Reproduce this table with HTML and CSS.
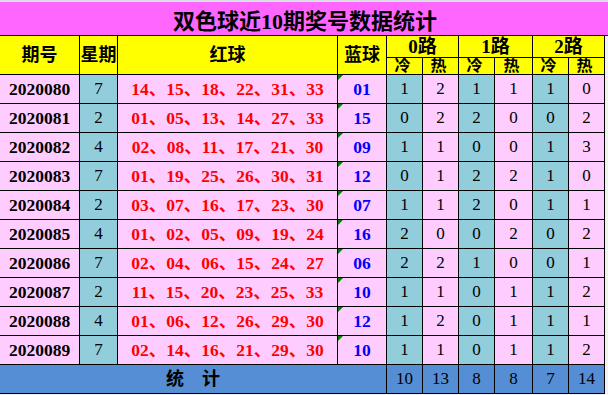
FILE: index.html
```html
<!DOCTYPE html>
<html lang="zh">
<head>
<meta charset="utf-8">
<title>双色球近10期奖号数据统计</title>
<link rel="stylesheet" href="styles.css">
</head>
<body>
<div class="sheet">
  <div class="title">双色球近10期奖号数据统计</div>
  <div class="grid">
    <div class="h span2r">期号</div>
    <div class="h span2r">星期</div>
    <div class="h span2r">红球</div>
    <div class="h span2r">蓝球</div>
    <div class="h span2c">0路</div>
    <div class="h span2c">1路</div>
    <div class="h span2c">2路</div>
    <div class="h sub">冷</div><div class="h sub">热</div>
    <div class="h sub">冷</div><div class="h sub">热</div>
    <div class="h sub">冷</div><div class="h sub">热</div>

    <div class="c id">2020080</div><div class="c wk">7</div><div class="c red">14、15、18、22、31、33</div><div class="c blue">01</div><div class="c n cold">1</div><div class="c n">2</div><div class="c n cold">1</div><div class="c n">1</div><div class="c n cold">1</div><div class="c n">0</div>
    <div class="c id">2020081</div><div class="c wk">2</div><div class="c red">01、05、13、14、27、33</div><div class="c blue">15</div><div class="c n cold">0</div><div class="c n">2</div><div class="c n cold">2</div><div class="c n">0</div><div class="c n cold">0</div><div class="c n">2</div>
    <div class="c id">2020082</div><div class="c wk">4</div><div class="c red">02、08、11、17、21、30</div><div class="c blue">09</div><div class="c n cold">1</div><div class="c n">1</div><div class="c n cold">0</div><div class="c n">0</div><div class="c n cold">1</div><div class="c n">3</div>
    <div class="c id">2020083</div><div class="c wk">7</div><div class="c red">01、19、25、26、30、31</div><div class="c blue">12</div><div class="c n cold">0</div><div class="c n">1</div><div class="c n cold">2</div><div class="c n">2</div><div class="c n cold">1</div><div class="c n">0</div>
    <div class="c id">2020084</div><div class="c wk">2</div><div class="c red">03、07、16、17、23、30</div><div class="c blue">07</div><div class="c n cold">1</div><div class="c n">1</div><div class="c n cold">2</div><div class="c n">0</div><div class="c n cold">1</div><div class="c n">1</div>
    <div class="c id">2020085</div><div class="c wk">4</div><div class="c red">01、02、05、09、19、24</div><div class="c blue">16</div><div class="c n cold">2</div><div class="c n">0</div><div class="c n cold">0</div><div class="c n">2</div><div class="c n cold">0</div><div class="c n">2</div>
    <div class="c id">2020086</div><div class="c wk">7</div><div class="c red">02、04、06、15、24、27</div><div class="c blue">06</div><div class="c n cold">2</div><div class="c n">2</div><div class="c n cold">1</div><div class="c n">0</div><div class="c n cold">0</div><div class="c n">1</div>
    <div class="c id">2020087</div><div class="c wk">2</div><div class="c red">11、15、20、23、25、33</div><div class="c blue">10</div><div class="c n cold">1</div><div class="c n">1</div><div class="c n cold">0</div><div class="c n">1</div><div class="c n cold">1</div><div class="c n">2</div>
    <div class="c id">2020088</div><div class="c wk">4</div><div class="c red">01、06、12、26、29、30</div><div class="c blue">12</div><div class="c n cold">1</div><div class="c n">2</div><div class="c n cold">0</div><div class="c n">1</div><div class="c n cold">1</div><div class="c n">1</div>
    <div class="c id">2020089</div><div class="c wk">7</div><div class="c red">02、14、16、21、29、30</div><div class="c blue">10</div><div class="c n cold">1</div><div class="c n">1</div><div class="c n cold">0</div><div class="c n">1</div><div class="c n cold">1</div><div class="c n">2</div>

    <div class="s label">统　计</div>
    <div class="s n">10</div><div class="s n">13</div><div class="s n">8</div><div class="s n">8</div><div class="s n">7</div><div class="s n">14</div>
  </div>
</div>
</body>
</html>
```

FILE: styles.css
```css
html, body {
  margin: 0;
  padding: 0;
  background: #ffffff;
}

.sheet {
  width: 608px;
  height: 395px;
  background: #f2f2f2;
  border-top: 2px solid #d9dde4;
  box-sizing: border-box;
}

.title {
  width: 606px;
  height: 33px;
  background: #ff66ff;
  border-bottom: 1px solid #000;
  display: flex;
  align-items: center;
  justify-content: center;
  font-family: "Liberation Serif", "Noto Sans CJK SC", serif;
  font-weight: 700;
  font-size: 22px;
  color: #000;
  padding-left: 2px;
  box-sizing: content-box;
}

.grid {
  display: grid;
  grid-template-columns: 79px 37px 219px 48px 35px 35px 35px 37px 35px 35px;
  grid-template-rows: 21px 16px repeat(10, 28px) 28px;
  gap: 1px;
  background: #000;
  width: 604px;
  border-right: 1px solid #000;
  border-bottom: 1px solid #000;
}

.grid > div {
  display: flex;
  align-items: center;
  justify-content: center;
  overflow: hidden;
  white-space: nowrap;
  position: relative;
}

.h {
  background: #ffff00;
  font-family: "Liberation Serif", "Noto Sans CJK SC", serif;
  font-weight: 700;
  font-size: 18px;
  line-height: 20px;
  color: #000;
}

.span2r { grid-row: span 2; }

.span2c {
  grid-column: span 2;
  font-size: 19px;
  line-height: 20px;
}

.grid > .sub {
  align-items: flex-start;
  font-size: 16px;
  line-height: 16px;
  padding-right: 4px;
}

.c {
  background: #ffccff;
  font-family: "Liberation Serif", "Noto Sans CJK SC", serif;
  font-size: 17px;
  line-height: 20px;
  color: #000;
}

.id {
  font-weight: 700;
  font-size: 17.5px;
}

.wk {
  background: #92cddc !important;
  font-size: 17px;
}

.red {
  color: #ff0000;
  font-weight: 700;
  font-size: 17.5px;
}

.blue {
  color: #0000ff;
  font-weight: 700;
  font-size: 17.5px;
}

.blue::before {
  content: "";
  position: absolute;
  left: 0;
  top: 0;
  border-top: 5px solid #008000;
  border-right: 5px solid transparent;
}

.n {
  font-size: 17px;
  font-weight: 400;
}

.cold {
  background: #92cddc;
}

.s {
  background: #558ed5;
  font-family: "Liberation Serif", "Noto Sans CJK SC", serif;
  font-size: 17px;
  line-height: 20px;
  color: #000;
}

.label {
  grid-column: span 4;
  font-weight: 700;
  font-size: 18px;
}
```
